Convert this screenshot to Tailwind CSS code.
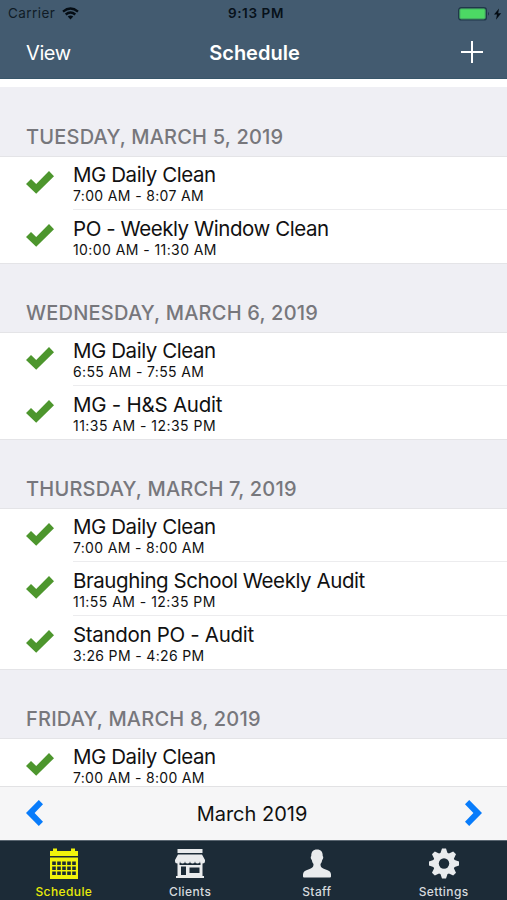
<!DOCTYPE html>
<html lang="en">
<head>
<meta charset="utf-8">
<meta name="viewport" content="width=device-width">
<title>Schedule</title>
<script src="https://cdn.jsdelivr.net/npm/@tailwindcss/browser@4"></script>
</head>
<body class="overflow-hidden bg-white">
<svg class="hidden">
  <symbol id="check" viewBox="0 0 28 23"><path d="M0 13 5 8 10.200 13 23 0 28 5.200 10.200 22.700Z" fill="#4d962d"/></symbol>
</svg>
<div class="flex h-[900px] w-[507px] flex-col overflow-hidden font-['Inter','Liberation_Sans',sans-serif] text-[#111]">
  <header class="h-[79px] shrink-0 border-b border-[#38566a] bg-[#435b70]">
    <div class="grid h-[27px] grid-cols-3 items-center pr-[5px] pl-[8px] text-[13.5px] text-[#101b26]">
      <div class="flex items-center gap-[7px]"><span class="tracking-[0.45px]">Carrier</span>
        <svg class="h-[13px] w-[17px]" viewBox="0 0 17 13" fill="none" stroke="#050d14" stroke-width="2.3"><path d="M1 4.6Q8.500-1.600 16 4.600M3.700 7.500Q8.500 3.500 13.300 7.500"/><path d="M5.700 9.500Q8.500 7.300 11.300 9.500L8.500 12.500Z" fill="#050d14" stroke="none"/></svg>
      </div>
      <div class="pl-[2px] text-center text-[13.5px] font-semibold tracking-[0.6px] whitespace-nowrap text-[#07111a]">9:13 PM</div>
      <svg class="h-[14px] w-[44px] justify-self-end" viewBox="0 0 44 14"><rect x=".7" y=".7" width="27.600" height="12.200" rx="2.500" fill="#4cd964" stroke="#20374a" stroke-width="1.400"/><rect x="1.800" y="1.800" width="25.400" height="10" rx="1" fill="none" stroke="#3d7560" stroke-width=".6"/><path d="M30 4.800q2 2 0 4Z" fill="#20374a"/><path d="M41 1.500 36 7.600h3l-1 5.200 5.200-6.600h-3Z" fill="#050d14"/></svg>
    </div>
    <div class="grid h-[50px] grid-cols-3 items-center pr-[24px] pl-[26px] text-white">
      <span class="pt-px text-[20px] tracking-[-0.4px]">View</span>
      <span class="pt-px text-center text-[20px] font-semibold">Schedule</span>
      <svg class="h-[22px] w-[22px] justify-self-end" viewBox="0 0 22 22" stroke="white" stroke-width="2"><path d="M11 0v22M0 11h22"/></svg>
    </div>
  </header>
  <main class="min-h-0 flex-1 overflow-hidden pt-[8px]">
    <section>
      <h2 class="flex h-[70px] items-end border-b border-[#e4e4e7] bg-[#efeff4] pb-[5px] pl-[26px] text-[20px] leading-[28px] font-medium tracking-[0.2px] text-[#77777c]">TUESDAY, MARCH 5, 2019</h2>
      <div class="flex h-[53px] pl-[26px]"><svg class="mt-[14px] h-[23px] w-[28px]"><use href="#check"/></svg><div class="ml-[19px] flex-1 border-b border-[#ececee] pt-[4px]"><p class="text-[20.5px] leading-[27px] tracking-[-0.45px]">MG Daily Clean</p><p class="text-[14px] leading-[15px] tracking-[0.35px]">7:00 AM - 8:07 AM</p></div></div>
      <div class="flex h-[53px] pl-[26px]"><svg class="mt-[14px] h-[23px] w-[28px]"><use href="#check"/></svg><div class="ml-[19px] flex-1 pt-[5px]"><p class="text-[20.5px] leading-[27px] tracking-[-0.45px]">PO - Weekly Window Clean</p><p class="text-[14px] leading-[15px] tracking-[0.42px]">10:00 AM - 11:30 AM</p></div></div>
    </section>
    <section>
      <h2 class="flex h-[70px] items-end border-y border-[#e4e4e7] bg-[#efeff4] pb-[5px] pl-[26px] text-[20px] leading-[28px] font-medium tracking-[0.22px] text-[#77777c]">WEDNESDAY, MARCH 6, 2019</h2>
      <div class="flex h-[53px] pl-[26px]"><svg class="mt-[14px] h-[23px] w-[28px]"><use href="#check"/></svg><div class="ml-[19px] flex-1 border-b border-[#ececee] pt-[4px]"><p class="text-[20.5px] leading-[27px] tracking-[-0.45px]">MG Daily Clean</p><p class="text-[14px] leading-[15px] tracking-[0.37px]">6:55 AM - 7:55 AM</p></div></div>
      <div class="flex h-[53px] pl-[26px]"><svg class="mt-[14px] h-[23px] w-[28px]"><use href="#check"/></svg><div class="ml-[19px] flex-1 pt-[5px]"><p class="text-[20.5px] leading-[27px] tracking-[-0.25px]">MG - H&amp;S Audit</p><p class="text-[14px] leading-[15px] tracking-[0.47px]">11:35 AM - 12:35 PM</p></div></div>
    </section>
    <section>
      <h2 class="flex h-[70px] items-end border-y border-[#e4e4e7] bg-[#efeff4] pb-[5px] pl-[26px] text-[20px] leading-[28px] font-medium tracking-[0.22px] text-[#77777c]">THURSDAY, MARCH 7, 2019</h2>
      <div class="flex h-[53px] pl-[26px]"><svg class="mt-[14px] h-[23px] w-[28px]"><use href="#check"/></svg><div class="ml-[19px] flex-1 border-b border-[#ececee] pt-[4px]"><p class="text-[20.5px] leading-[27px] tracking-[-0.45px]">MG Daily Clean</p><p class="text-[14px] leading-[15px] tracking-[0.32px]">7:00 AM - 8:00 AM</p></div></div>
      <div class="flex h-[54px] pl-[26px]"><svg class="mt-[14px] h-[23px] w-[28px]"><use href="#check"/></svg><div class="ml-[19px] flex-1 border-b border-[#ececee] pt-[5px]"><p class="text-[20.5px] leading-[27px] tracking-[-0.43px]">Braughing School Weekly Audit</p><p class="text-[14px] leading-[15px] tracking-[0.47px]">11:55 AM - 12:35 PM</p></div></div>
      <div class="flex h-[53px] pl-[26px]"><svg class="mt-[14px] h-[23px] w-[28px]"><use href="#check"/></svg><div class="ml-[19px] flex-1 pt-[5px]"><p class="text-[20.5px] leading-[27px] tracking-[-0.32px]">Standon PO - Audit</p><p class="text-[14px] leading-[15px] tracking-[0.35px]">3:26 PM - 4:26 PM</p></div></div>
    </section>
    <section>
      <h2 class="flex h-[70px] items-end border-y border-[#e4e4e7] bg-[#efeff4] pb-[5px] pl-[26px] text-[20px] leading-[28px] font-medium tracking-[0.2px] text-[#77777c]">FRIDAY, MARCH 8, 2019</h2>
      <div class="flex h-[53px] pl-[26px]"><svg class="mt-[14px] h-[23px] w-[28px]"><use href="#check"/></svg><div class="ml-[19px] flex-1 pt-[4px]"><p class="text-[20.5px] leading-[27px] tracking-[-0.45px]">MG Daily Clean</p><p class="text-[14px] leading-[15px] tracking-[0.32px]">7:00 AM - 8:00 AM</p></div></div>
    </section>
  </main>
  <div class="flex h-[54px] shrink-0 items-center justify-between border-t border-[#e2e2e4] bg-[#f6f6f7] pr-[25px] pb-[1px] pl-[26px]">
    <svg class="h-[26px] w-[17px]" viewBox="0 0 17 26"><path d="M12.800 0 17 4.200 8.600 13 17 21.800 12.800 26 0 13Z" fill="#087cfb"/></svg>
    <span class="pt-px pr-[4px] text-[20px]">March 2019</span>
    <svg class="h-[26px] w-[17px]" viewBox="0 0 17 26"><path d="M4.200 0 0 4.200 8.400 13 0 21.800 4.200 26 17 13Z" fill="#087cfb"/></svg>
  </div>
  <nav class="grid h-[60px] shrink-0 grid-cols-4 border-t border-[#5a6671] bg-[#1c2b37] text-[12px] font-medium tracking-[0.4px] text-[#d6dade]">
    <div class="flex flex-col items-center pt-[7px] pl-[1px] text-[#e9eb09]">
      <svg class="h-[31px] w-[30px]" viewBox="0 0 30 31"><path d="M1 3h3V.5h4V3h14V.5h4V3h3v5H1ZM1 9.500h28V31H1Z" fill="#f1f40b"/><g stroke="#1c2b37" stroke-width="3.400" stroke-dasharray="3.600 1.400"><path d="M3.200 15.200h23.700M3.200 20.200h23.700M3.200 25.200h23.700"/></g></svg>
      <span class="mt-[5px] leading-[16px]">Schedule</span>
    </div>
    <div class="flex flex-col items-center pt-[7px]">
      <svg class="h-[31px] w-[30px]" viewBox="0 0 30 31" fill="#e9ebed"><path d="M2.500 1h25v4h-25ZM3 6.500h24L30 12v1a2.500 2.500 0 0 1-5 0 2.500 2.500 0 0 1-5 0 2.500 2.500 0 0 1-5 0 2.500 2.500 0 0 1-5 0 2.500 2.500 0 0 1-5 0 2.500 2.500 0 0 1-5 0v-1Z"/><path fill-rule="evenodd" d="M2.500 13h2v4h21v-4h2v15H29v2H1v-2h1.500ZM6 18.500V27h5v-8.500Zm8.500 1v5.500h10v-5.500Z"/></svg>
      <span class="mt-[5px] leading-[16px]">Clients</span>
    </div>
    <div class="flex flex-col items-center pt-[7px]">
      <svg class="h-[31px] w-[30px]" viewBox="0 0 30 31" fill="#e9ebed"><path d="M15 1.500c4 0 6 2.700 5.700 6.500 1 .7.600 3-.5 4-.3 2-1 3-1.700 4 0 3 1 4 4.500 5.200 4 1.300 6 2.500 6 5.300v2q0 1-1 1H2q-1 0-1-1v-2c0-2.800 2-4 6-5.300 3.500-1.200 4.500-2.200 4.500-5.200-.7-1-1.400-2-1.700-4-1.100-1-1.500-3.300-.5-4C9 4.200 11 1.500 15 1.500Z"/></svg>
      <span class="mt-[5px] leading-[16px]">Staff</span>
    </div>
    <div class="flex flex-col items-center pt-[7px]">
      <svg class="h-[31px] w-[30px]" viewBox="-15 -15.500 30 31"><g fill="#e9ebed"><circle r="11"/><path d="M-3.700-10-2-15h4l1.700 5v20L2 15h-4l-1.700-5Z"/><path d="M-3.700-10-2-15h4l1.700 5v20L2 15h-4l-1.700-5Z" transform="rotate(45)"/><path d="M-3.700-10-2-15h4l1.700 5v20L2 15h-4l-1.700-5Z" transform="rotate(90)"/><path d="M-3.700-10-2-15h4l1.700 5v20L2 15h-4l-1.700-5Z" transform="rotate(135)"/></g><circle r="5.200" fill="#1c2b37"/></svg>
      <span class="mt-[5px] leading-[16px]">Settings</span>
    </div>
  </nav>
</div>
</body>
</html>
